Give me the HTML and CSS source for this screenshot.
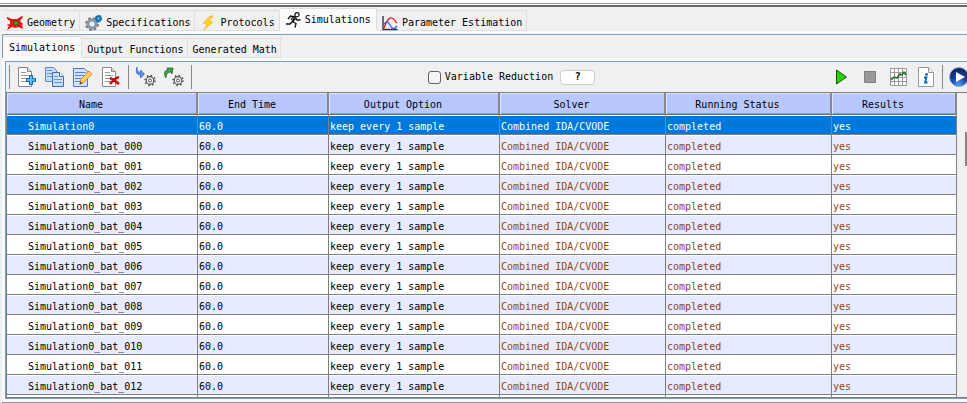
FILE: index.html
```html
<!DOCTYPE html>
<html lang="en">
<head>
<meta charset="utf-8">
<title>Simulations</title>
<link rel="stylesheet" href="styles.css">
</head>
<body>
<div class="app">
  <div class="divider"></div>
  <nav class="tabs main-tabs">
    <button class="tab">
      <svg width="16" height="16" viewBox="0 0 16 16"><path d="M0 2l5 2 5 0 5-3 1 1-3 4 3 3-1 1 1 4-4-2-4 1-3-1-5 3 2-4-3-1 4-1 0-3-4-3z" fill="#f01818"/><path d="M0 3l5 3M15 2l-4 3M1 13l4-3M15 13l-3-2" stroke="#c01010"/><rect x="7" y="6" width="4" height="4" fill="#20c020" stroke="#703010"/></svg>
      Geometry</button>
    <button class="tab">
      <svg width="17" height="16" viewBox="0 0 17 16"><circle cx="7" cy="9" r="5.7" fill="none" stroke="#68737b" stroke-width="2.4" stroke-dasharray="2.5 2"/><circle cx="7" cy="9" r="4" fill="none" stroke="#8a9aa6" stroke-width="3"/><circle cx="7" cy="9" r="1.8" fill="#e8f4ff"/><circle cx="13.5" cy="3.5" r="2" fill="none" stroke="#1677bd" stroke-width="2.4"/><circle cx="13.5" cy="3.5" r="3" fill="none" stroke="#1677bd" stroke-width="1.4" stroke-dasharray="1.5 1"/></svg>
      Specifications</button>
    <button class="tab">
      <svg width="16" height="16" viewBox="0 0 16 16"><path d="M10 1L3 8l4 1-3 6 9-8-4-1 4-5z" fill="#ffd21c" stroke="#f3b51a" stroke-width=".7"/></svg>
      Protocols</button>
    <button class="tab selected">
      <svg width="16" height="16" viewBox="0 0 16 16"><circle cx="12" cy="2.7" r="2.1" fill="#fff" stroke="#111" stroke-width="1.2"/><path d="M10 5L5.500 4 3 7M9.500 5.500L7 10l-2 2H1M7 9.500l4 2-1 4M10 5.500l2 2.500h3.500M6 8l2-3M8 10l2-3" fill="none" stroke="#111" stroke-width="1.3"/></svg>
      Simulations</button>
    <button class="tab">
      <svg width="16" height="16" viewBox="0 0 16 16"><path d="M1 1v13.500h14.500" fill="none" stroke="#33334c" stroke-width="1.4"/><path d="M2 13C5 5 7 2 10 3s2 3 5 5" fill="none" stroke="#ee1515" stroke-width="1.3"/><path d="M2 9c3-3 4-3 6 1s4 5 7 1" fill="none" stroke="#2864e6" stroke-width="1.3"/></svg>
      Parameter Estimation</button>
  </nav>
  <main class="frame">
    <nav class="tabs sub-tabs">
      <button class="tab selected">Simulations</button>
      <button class="tab">Output Functions</button>
      <button class="tab">Generated Math</button>
    </nav>
    <section class="panel">
      <div class="toolbar">
        <div class="group edit">
          <span class="sep"></span>
          <button class="tool" aria-label="New simulation"><svg width="20" height="20" viewBox="0 0 20 20"><path d="M1.500 .5h9l4 4v15h-13z" fill="#fff" stroke="#888"/><path d="M10.500 .5v4h4" fill="#ddd" stroke="#888"/><path d="M4 5.500h5M4 8.500h8M4 11.500h6M4 14.500h6" stroke="#999"/><path d="M12.500 8.500h3v3h3v3h-3v3h-3v-3h-3v-3h3z" fill="#62b8ee" stroke="#0864b0"/></svg></button>
          <button class="tool" aria-label="Copy"><svg width="20" height="20" viewBox="0 0 20 20"><path d="M.5 .5h8l3 3v11h-11z" fill="#c4ddf8" stroke="#6187bb"/><path d="M2 3.500h5M2 6.500h7M2 9.500h7" stroke="#7194c7"/><path d="M7.500 5.500h7l4 4v10h-11z" fill="#c8e0fa" stroke="#4168b0"/><path d="M14.500 5.500v4h4" fill="#fff" stroke="#4168b0"/><path d="M9 9.500h4M9 12.500h8M9 15.500h8" stroke="#7194c7"/></svg></button>
          <button class="tool" aria-label="Edit"><svg width="20" height="20" viewBox="0 0 20 20"><path d="M.5 1.500h11l3 3v15h-14z" fill="#d3e2ff" stroke="#5275d0"/><path d="M2 5.500h11M2 8.500h10M2 11.500h8M2 14.500h5" stroke="#5c82d8"/><path d="M16 4l3 3-8 8-4 2 1-5z" fill="#ffd35a" stroke="#d39424"/><path d="M6.500 17.500l1-3 2 2z" fill="#704018"/></svg></button>
          <button class="tool" aria-label="Delete"><svg width="20" height="20" viewBox="0 0 20 20"><path d="M1.500 .5h9l4 4v15h-13z" fill="#fff" stroke="#888"/><path d="M10.500 .5v4h4" fill="#ddd" stroke="#888"/><path d="M4 5.500h5M4 8.500h8M4 11.500h6M4 14.500h6" stroke="#999"/><path d="M9 11c4 1 6 4 9 6M18 10c-4 1-6 4-9 7" fill="none" stroke="#c80c10" stroke-width="2.4"/></svg></button>
          <span class="sep"></span>
          <button class="tool" aria-label="Import batch"><svg width="20" height="20" viewBox="0 0 20 20"><path d="M1 0C-1 5 1 8 4.500 8v3l4-4-4-4v2.500C2.500 5.500 1 4 1 0z" fill="#5c90ea" stroke="#3868bc" stroke-width=".8"/><circle cx="14" cy="13.500" r="3.800" fill="#f5f5f5" stroke="#505050" stroke-width="1.2"/><circle cx="14" cy="13.500" r="5" fill="none" stroke="#505050" stroke-width="1.500" stroke-dasharray="1.500 2.430"/><circle cx="14" cy="13.500" r="1.500" fill="none" stroke="#505050"/></svg></button>
          <button class="tool" aria-label="Export batch"><svg width="20" height="20" viewBox="0 0 20 20"><path d="M2 11C-1 6 1 3 4 3L3 1l6 0-1 6-1-2C4 5 2 7 2 11z" fill="#39a34a" stroke="#20642a" stroke-width=".8"/><circle cx="14" cy="13.500" r="3.800" fill="#f5f5f5" stroke="#505050" stroke-width="1.2"/><circle cx="14" cy="13.500" r="5" fill="none" stroke="#505050" stroke-width="1.500" stroke-dasharray="1.500 2.430"/><circle cx="14" cy="13.500" r="1.500" fill="none" stroke="#505050"/></svg></button>
          <span class="sep"></span>
        </div>
        <div class="group options">
          <label class="check"><input type="checkbox">Variable Reduction</label>
          <button class="help">?</button>
        </div>
        <div class="group run">
          <button class="tool" aria-label="Run"><svg width="20" height="20" viewBox="0 0 20 20"><path d="M4.500 3l10 7-10 7z" fill="#2bd000" stroke="#174d0a"/></svg></button>
          <button class="tool" aria-label="Stop"><svg width="20" height="20" viewBox="0 0 20 20"><path d="M4.500 4.500h11v11h-11z" fill="#999" stroke="#808080"/></svg></button>
          <button class="tool" aria-label="Results"><svg width="20" height="20" viewBox="0 0 20 20"><path d="M2.500 1.500h16v17h-16z" fill="#fff"/><path d="M2.500 1.500h16v17h-16zM6.500 1v18M10.500 1v18M14.500 1v18M2 5.500h17M2 10.500h17M2 14.500h17" fill="none" stroke="#999"/><path d="M3 13l3-3 3 1 3-4 2 1 2-3 2 3" fill="none" stroke="#1d6b2d" stroke-width="1.500"/></svg></button>
          <button class="tool" aria-label="Info"><svg width="20" height="20" viewBox="0 0 20 20"><path d="M2.500 .5h10l5 5v14h-15z" fill="#fff" stroke="#999"/><path d="M12.500 .5v5h5" fill="#f0f0f0" stroke="#999"/><circle cx="10.500" cy="7.500" r="1.400" fill="#0868b8"/><path d="M8 10.500h2.500L9 15.500h2.500" fill="none" stroke="#0868b8" stroke-width="1.800"/></svg></button>
          <span class="sep"></span>
          <button class="tool play" aria-label="Play"><svg width="22" height="20" viewBox="0 0 22 20"><defs><radialGradient id="ball" cx="50%" cy="90%" r="85%"><stop offset="0" stop-color="#4c9cf5"/><stop offset=".5" stop-color="#1740a8"/><stop offset="1" stop-color="#10245c"/></radialGradient></defs><circle cx="10" cy="10" r="9.500" fill="url(#ball)" stroke="#93a6cf"/><path d="M7 5l9 5-9 5z" fill="#fff"/></svg></button>
        </div>
      </div>
      <div class="scroller">
        <table>
          <colgroup><col class="c-name"><col class="c-time"><col class="c-output"><col class="c-solver"><col class="c-status"><col class="c-results"></colgroup>
          <thead><tr><th>Name</th><th>End Time</th><th>Output Option</th><th>Solver</th><th>Running Status</th><th>Results</th></tr></thead>
          <tbody>
            <tr class="active"><td>Simulation0</td><td>60.0</td><td>keep every 1 sample</td><td>Combined IDA/CVODE</td><td>completed</td><td>yes</td></tr>
            <tr><td>Simulation0_bat_000</td><td>60.0</td><td>keep every 1 sample</td><td>Combined IDA/CVODE</td><td>completed</td><td>yes</td></tr>
            <tr><td>Simulation0_bat_001</td><td>60.0</td><td>keep every 1 sample</td><td>Combined IDA/CVODE</td><td>completed</td><td>yes</td></tr>
            <tr><td>Simulation0_bat_002</td><td>60.0</td><td>keep every 1 sample</td><td>Combined IDA/CVODE</td><td>completed</td><td>yes</td></tr>
            <tr><td>Simulation0_bat_003</td><td>60.0</td><td>keep every 1 sample</td><td>Combined IDA/CVODE</td><td>completed</td><td>yes</td></tr>
            <tr><td>Simulation0_bat_004</td><td>60.0</td><td>keep every 1 sample</td><td>Combined IDA/CVODE</td><td>completed</td><td>yes</td></tr>
            <tr><td>Simulation0_bat_005</td><td>60.0</td><td>keep every 1 sample</td><td>Combined IDA/CVODE</td><td>completed</td><td>yes</td></tr>
            <tr><td>Simulation0_bat_006</td><td>60.0</td><td>keep every 1 sample</td><td>Combined IDA/CVODE</td><td>completed</td><td>yes</td></tr>
            <tr><td>Simulation0_bat_007</td><td>60.0</td><td>keep every 1 sample</td><td>Combined IDA/CVODE</td><td>completed</td><td>yes</td></tr>
            <tr><td>Simulation0_bat_008</td><td>60.0</td><td>keep every 1 sample</td><td>Combined IDA/CVODE</td><td>completed</td><td>yes</td></tr>
            <tr><td>Simulation0_bat_009</td><td>60.0</td><td>keep every 1 sample</td><td>Combined IDA/CVODE</td><td>completed</td><td>yes</td></tr>
            <tr><td>Simulation0_bat_010</td><td>60.0</td><td>keep every 1 sample</td><td>Combined IDA/CVODE</td><td>completed</td><td>yes</td></tr>
            <tr><td>Simulation0_bat_011</td><td>60.0</td><td>keep every 1 sample</td><td>Combined IDA/CVODE</td><td>completed</td><td>yes</td></tr>
            <tr><td>Simulation0_bat_012</td><td>60.0</td><td>keep every 1 sample</td><td>Combined IDA/CVODE</td><td>completed</td><td>yes</td></tr>
            <tr><td></td><td></td><td></td><td></td><td></td><td></td></tr>
          </tbody>
        </table>
        <div class="track"><div class="thumb"></div></div>
      </div>
    </section>
  </main>
</div>
</body>
</html>
```
FILE: styles.css
```css
* { box-sizing: border-box; }

body {
  margin: 0;
  background: #f0f0f0;
  color: #000;
}

body, button {
  font: 10px/12px "DejaVu Sans Mono", "Liberation Mono", monospace;
}

button {
  color: inherit;
  margin: 0;
  padding: 0;
  border: 0;
  background: none;
}

.app {
  display: flex;
  flex-direction: column;
  height: 100vh;
  overflow: hidden;
}

.divider {
  height: 7px;
  flex: none;
  background: linear-gradient(#fff 3px, #a0a0a0 3px, #a0a0a0 4px, #fff 4px, #fff 5px, #686868 5px);
}

/* Tab strips */
.tabs {
  display: flex;
  align-items: flex-end;
  flex: none;
}

.tab {
  display: flex;
  align-items: center;
  gap: 4px;
  height: 21px;
  padding: 4px 4px 0 5px;
  border: 1px solid #dedede;
  border-left: 0;
  white-space: nowrap;
}

.main-tabs { height: 24px; padding-left: 2px; }
.tab.selected { background: #fafafa; border-bottom-color: #fafafa; }
.main-tabs .selected { height: 23px; padding: 0 5px 0 5px; }

.frame {
  display: flex;
  flex-direction: column;
  flex: 1;
  min-height: 0;
  margin-left: 2px;
  border: 1px solid #7a9ebd;
  border-right: 0;
  box-shadow: 0 -3px #fafafa;
  margin-top: 3px;
}

.sub-tabs { height: 23px; padding-left: 1px; }
.sub-tabs .tab { height: 20px; padding: 3px 3px 0 5px; }
.sub-tabs .selected { height: 22px; padding: 1px 6px 0 5px; }

.panel {
  display: flex;
  flex-direction: column;
  flex: 1;
  min-height: 0;
  margin: 3px 0 3px 2px;
  border: 1px solid #7a9ebd;
  border-right: 0;
  box-shadow: 0 0 0 3px #fafafa;
}

/* Toolbar */
.toolbar {
  display: flex;
  align-items: center;
  justify-content: space-between;
  flex: none;
  height: 30px;
  padding-left: 4px;
}

.group { display: flex; align-items: center; }
.sep { width: 1px; height: 24px; background: #888; }
.tool { display: flex; }
.tool svg, .tab svg { display: block; flex: none; }
.edit { gap: 8px; }
.edit .sep { margin: 0 -1px; }
.options { gap: 7px; }
.run { gap: 8px; }
.run .sep { margin-left: -2px; }
.run .play { margin: 0 -4px 0 -2px; }

.check { display: flex; align-items: center; gap: 4px; }

.check input {
  appearance: none;
  width: 13px;
  height: 13px;
  margin: 0;
  border: 1px solid #606060;
  border-radius: 3px;
  background: #f5f5f5;
}

.help {
  width: 35px;
  height: 15px;
  border: 1px solid #ccc;
  border-radius: 4px;
  background: #fff;
  font-weight: bold;
}

/* Simulation list */
.scroller {
  display: flex;
  align-items: flex-start;
  flex: 1;
  min-height: 0;
  overflow: hidden;
  border: 1px solid #808080;
  border-width: 1px 0 1px 1px;
}

table {
  flex: 1;
  width: 100%;
  table-layout: fixed;
  border-collapse: separate;
  border-spacing: 0;
}

.c-name { width: 191px; }
.c-time { width: 131px; }
.c-output { width: 171px; }
.c-solver { width: 166px; }
.c-status { width: 166px; }
.c-results { width: 125px; }

th {
  height: 22px;
  padding: 2px 21px 0 0;
  border-right: 2px solid #888;
  border-bottom: 1px solid #707070;
  background: #b8c8ff;
  box-shadow: inset 1px 1px #dde4f5, inset 0 -1px #9a9a9a;
  font-weight: normal;
}

td {
  height: 20px;
  padding: 4px 0 0 1px;
  border-right: 1px solid #808080;
  border-bottom: 1px solid #808080;
  background: #fff;
  box-shadow: inset 0 1px #fff;
  white-space: nowrap;
  overflow: hidden;
}

td:first-child { padding-left: 21px; }
tr:nth-child(even) td { background: #e6ebff; }
td:nth-child(n+4) { color: #8b3f32; }
td:nth-child(4), td:nth-child(6) { color: #8f4a16; }
tbody .active td { background: #0078d7; color: #fff; }

.track { width: 10px; flex: none; padding-top: 39px; }
.thumb { width: 2px; height: 34px; margin-left: auto; background: #858585; }
```
